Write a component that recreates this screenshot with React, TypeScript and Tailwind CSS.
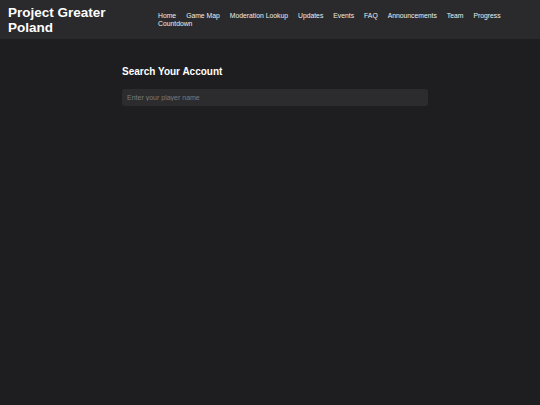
const navItems = [
  "Home",
  "Game Map",
  "Moderation Lookup",
  "Updates",
  "Events",
  "FAQ",
  "Announcements",
  "Team",
  "Progress",
  "Countdown",
]

export default function App() {
  return (
    <div className="min-h-[405px] bg-[#1e1e20] font-['Liberation_Sans',Arial,sans-serif]">
      <header className="flex h-[39px] items-center bg-[#2a2a2c] px-[8px]">
        <div className="w-[150px] shrink-0 pr-[40px]">
          <h1 className="text-[13.5px] font-bold leading-[15px] text-white">
            Project Greater Poland
          </h1>
        </div>
        <nav className="flex flex-1 flex-wrap gap-x-[10px] pr-[20px] text-[6.8px] leading-[7.5px] text-[#eeeeee]">
          {navItems.map((item) => (
            <a key={item} href="#">
              {item}
            </a>
          ))}
        </nav>
      </header>

      <main className="pl-[122px] pt-[27px]">
        <div className="w-[306px]">
          <h2 className="text-[10px] font-bold leading-[12px] text-white">
            Search Your Account
          </h2>
          <input
            type="text"
            placeholder="Enter your player name"
            className="mt-[11px] h-[17px] w-full rounded-[3px] bg-[#2c2c2e] px-[5px] text-[7px] text-white outline-none placeholder:text-[#7a7a7c]"
          />
        </div>
      </main>
    </div>
  )
}
